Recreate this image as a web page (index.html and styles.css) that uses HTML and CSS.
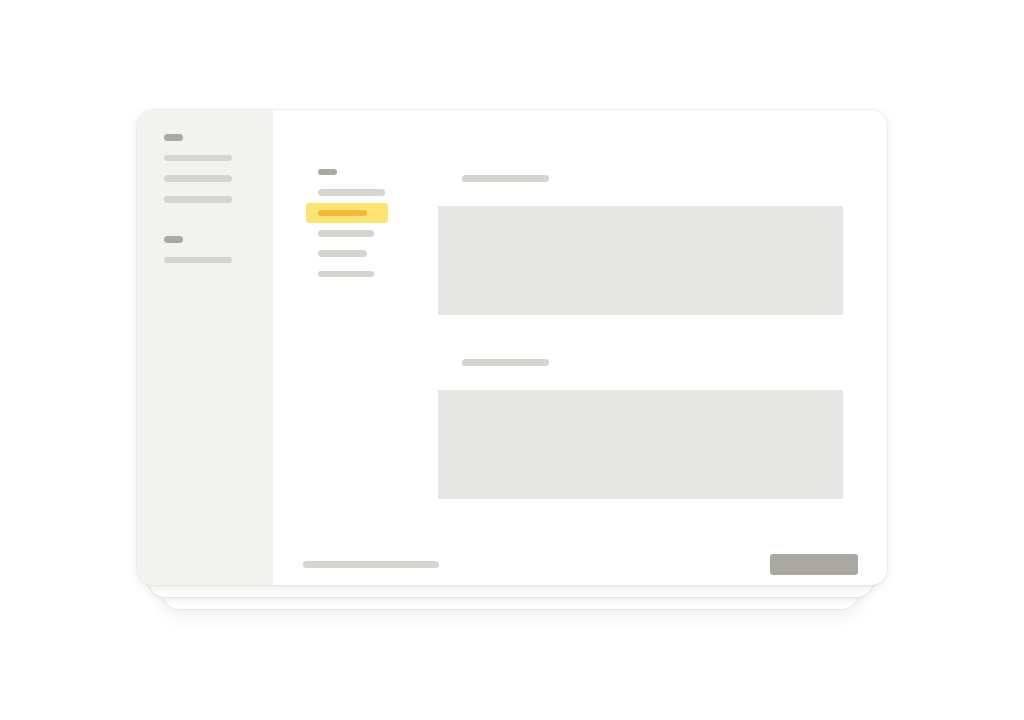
FILE: index.html
```html
<!DOCTYPE html>
<html lang="en">
<head>
<meta charset="utf-8">
<title>Settings mockup</title>
<link rel="stylesheet" href="styles.css">
</head>
<body>
<div class="stage">
  <div class="stack">
    <div class="sheet sheet-3"></div>
    <div class="sheet sheet-2"></div>
    <div class="card">
      <aside class="sidebar">
        <div class="side-group">
          <span class="pill head"></span>
          <span class="pill line w68"></span>
          <span class="pill line w68"></span>
          <span class="pill line w68"></span>
        </div>
        <div class="side-group">
          <span class="pill head"></span>
          <span class="pill line w68"></span>
        </div>
      </aside>
      <main class="main">
        <div class="body">
          <nav class="nav">
            <div class="nav-item"><span class="pill head"></span></div>
            <div class="nav-item"><span class="pill line w67"></span></div>
            <div class="nav-item active"><span class="pill mark"></span></div>
            <div class="nav-item"><span class="pill line w56"></span></div>
            <div class="nav-item"><span class="pill line w49"></span></div>
            <div class="nav-item"><span class="pill line w56"></span></div>
          </nav>
          <section class="content">
            <div class="section">
              <span class="pill line title"></span>
              <div class="block"></div>
            </div>
            <div class="section">
              <span class="pill line title"></span>
              <div class="block"></div>
            </div>
          </section>
        </div>
        <footer class="footer">
          <span class="pill line w136"></span>
          <span class="button"></span>
        </footer>
      </main>
    </div>
  </div>
</div>
</body>
</html>
```

FILE: styles.css
```css
html, body {
  margin: 0;
  padding: 0;
  background: #ffffff;
  font-family: "Liberation Sans", Arial, sans-serif;
}

.stage {
  width: 1024px;
  height: 720px;
  padding-top: 110px;
  box-sizing: border-box;
}

.stack {
  position: relative;
  width: 750px;
  height: 475px;
  margin: 0 auto;
}

.sheet {
  position: absolute;
  background: #ffffff;
  border-radius: 16px;
  box-shadow: 0 0 0 1px rgba(0, 0, 0, 0.045), 0 2px 8px rgba(0, 0, 0, 0.09);
}

.sheet-2 {
  left: 12px;
  right: 14px;
  top: 20px;
  bottom: -12px;
}

.sheet-3 {
  left: 26px;
  right: 29px;
  top: 40px;
  bottom: -24px;
  box-shadow: 0 0 0 1px rgba(0, 0, 0, 0.045), 0 6px 18px rgba(0, 0, 0, 0.08);
}

.card {
  position: relative;
  display: flex;
  width: 100%;
  height: 100%;
  background: #ffffff;
  border-radius: 16px;
  overflow: hidden;
  box-shadow: 0 0 0 1px rgba(0, 0, 0, 0.035), 0 2px 8px rgba(0, 0, 0, 0.1);
}

.sidebar {
  width: 136px;
  flex: none;
  background: #f2f2f1;
  padding: 24px 0 0 27px;
  box-sizing: border-box;
  display: flex;
  flex-direction: column;
  gap: 33.5px;
}

.side-group {
  display: flex;
  flex-direction: column;
  gap: 14.1px;
}

.pill {
  display: block;
  height: 6.6px;
  border-radius: 4px;
}

.head {
  width: 19px;
  background: #a9a9a2;
}

.line {
  background: #d4d4d0;
}

.w68 { width: 68px; }
.w67 { width: 67px; }
.w56 { width: 56px; }
.w49 { width: 49px; }
.w136 { width: 136px; }

.main {
  flex: 1;
  display: flex;
  flex-direction: column;
  min-width: 0;
}

.body {
  flex: 1;
  display: flex;
  padding-left: 33px;
}

.nav {
  width: 82px;
  padding-top: 52px;
  display: flex;
  flex-direction: column;
}

.nav-item {
  height: 20.4px;
  display: flex;
  align-items: center;
  padding-left: 12px;
  border-radius: 3px;
}

.nav-item.active {
  background: #fde374;
}

.mark {
  width: 49px;
  background: #f0b93b;
}

.content {
  margin-left: 50px;
  width: 405px;
  padding-top: 65px;
  display: flex;
  flex-direction: column;
  gap: 44.5px;
}

.section {
  display: flex;
  flex-direction: column;
}

.title {
  width: 87px;
  margin-left: 24px;
  margin-bottom: 24px;
}

.block {
  height: 109px;
  background: #e5e5e3;
}

.footer {
  display: flex;
  align-items: center;
  justify-content: space-between;
  padding: 0 29px 10px 30px;
}

.button {
  display: block;
  width: 88px;
  height: 21px;
  border-radius: 3px;
  background: #a9a9a2;
}
```
